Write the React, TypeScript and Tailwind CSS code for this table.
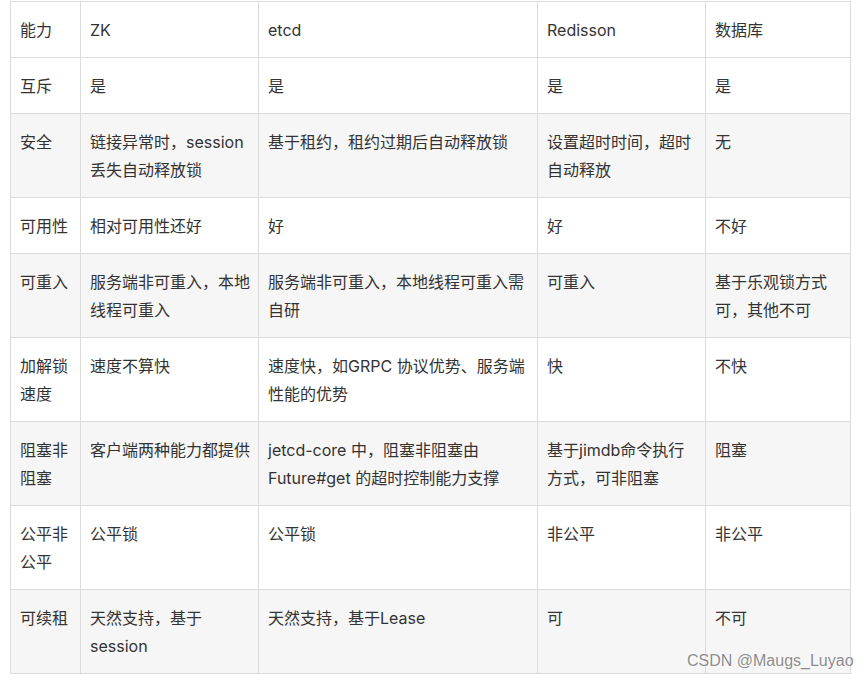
const rows: string[][] = [
  ['能力', 'ZK', 'etcd', 'Redisson', '数据库'],
  ['互斥', '是', '是', '是', '是'],
  ['安全', '链接异常时，session 丢失自动释放锁', '基于租约，租约过期后自动释放锁', '设置超时时间，超时自动释放', '无'],
  ['可用性', '相对可用性还好', '好', '好', '不好'],
  ['可重入', '服务端非可重入，本地线程可重入', '服务端非可重入，本地线程可重入需自研', '可重入', '基于乐观锁方式可，其他不可'],
  ['加解锁速度', '速度不算快', '速度快，如GRPC 协议优势、服务端性能的优势', '快', '不快'],
  ['阻塞非阻塞', '客户端两种能力都提供', 'jetcd-core 中，阻塞非阻塞由 Future#get 的超时控制能力支撑', '基于jimdb命令执行方式，可非阻塞', '阻塞'],
  ['公平非公平', '公平锁', '公平锁', '非公平', '非公平'],
  ['可续租', '天然支持，基于 session', '天然支持，基于Lease', '可', '不可'],
];

const widths = ['w-[70px]', 'w-[178px]', 'w-[279px]', 'w-[168px]', 'w-[145px]'];

export default function App() {
  return (
    <div className="relative h-[683px] w-[867px] overflow-hidden bg-white font-['Inter','Noto_Sans_CJK_SC',sans-serif] text-[16px] leading-[28px] text-[#333]">
      <table className="ml-[10px] mt-px w-[840px] table-fixed border-collapse">
        <colgroup>
          {widths.map((w, i) => (
            <col key={i} className={w} />
          ))}
        </colgroup>
        <tbody>
          {rows.map((row, r) => (
            <tr key={r} className={r >= 2 && r % 2 === 0 ? 'bg-[#f6f6f6]' : 'bg-white'}>
              {row.map((cell, c) => (
                <td
                  key={c}
                  className="border border-[#dcdcdc] pb-[13px] pl-[9px] pr-[5px] pt-[14px] align-top break-words"
                >
                  {cell}
                </td>
              ))}
            </tr>
          ))}
        </tbody>
      </table>
      <div className="absolute left-[687px] top-[649px] font-['Liberation_Sans',sans-serif] text-[16px] leading-[24px] text-[#8c8c8c] [text-shadow:0_0_2px_#fff,0_0_2px_#fff]">
        CSDN @Maugs_Luyao
      </div>
    </div>
  );
}
